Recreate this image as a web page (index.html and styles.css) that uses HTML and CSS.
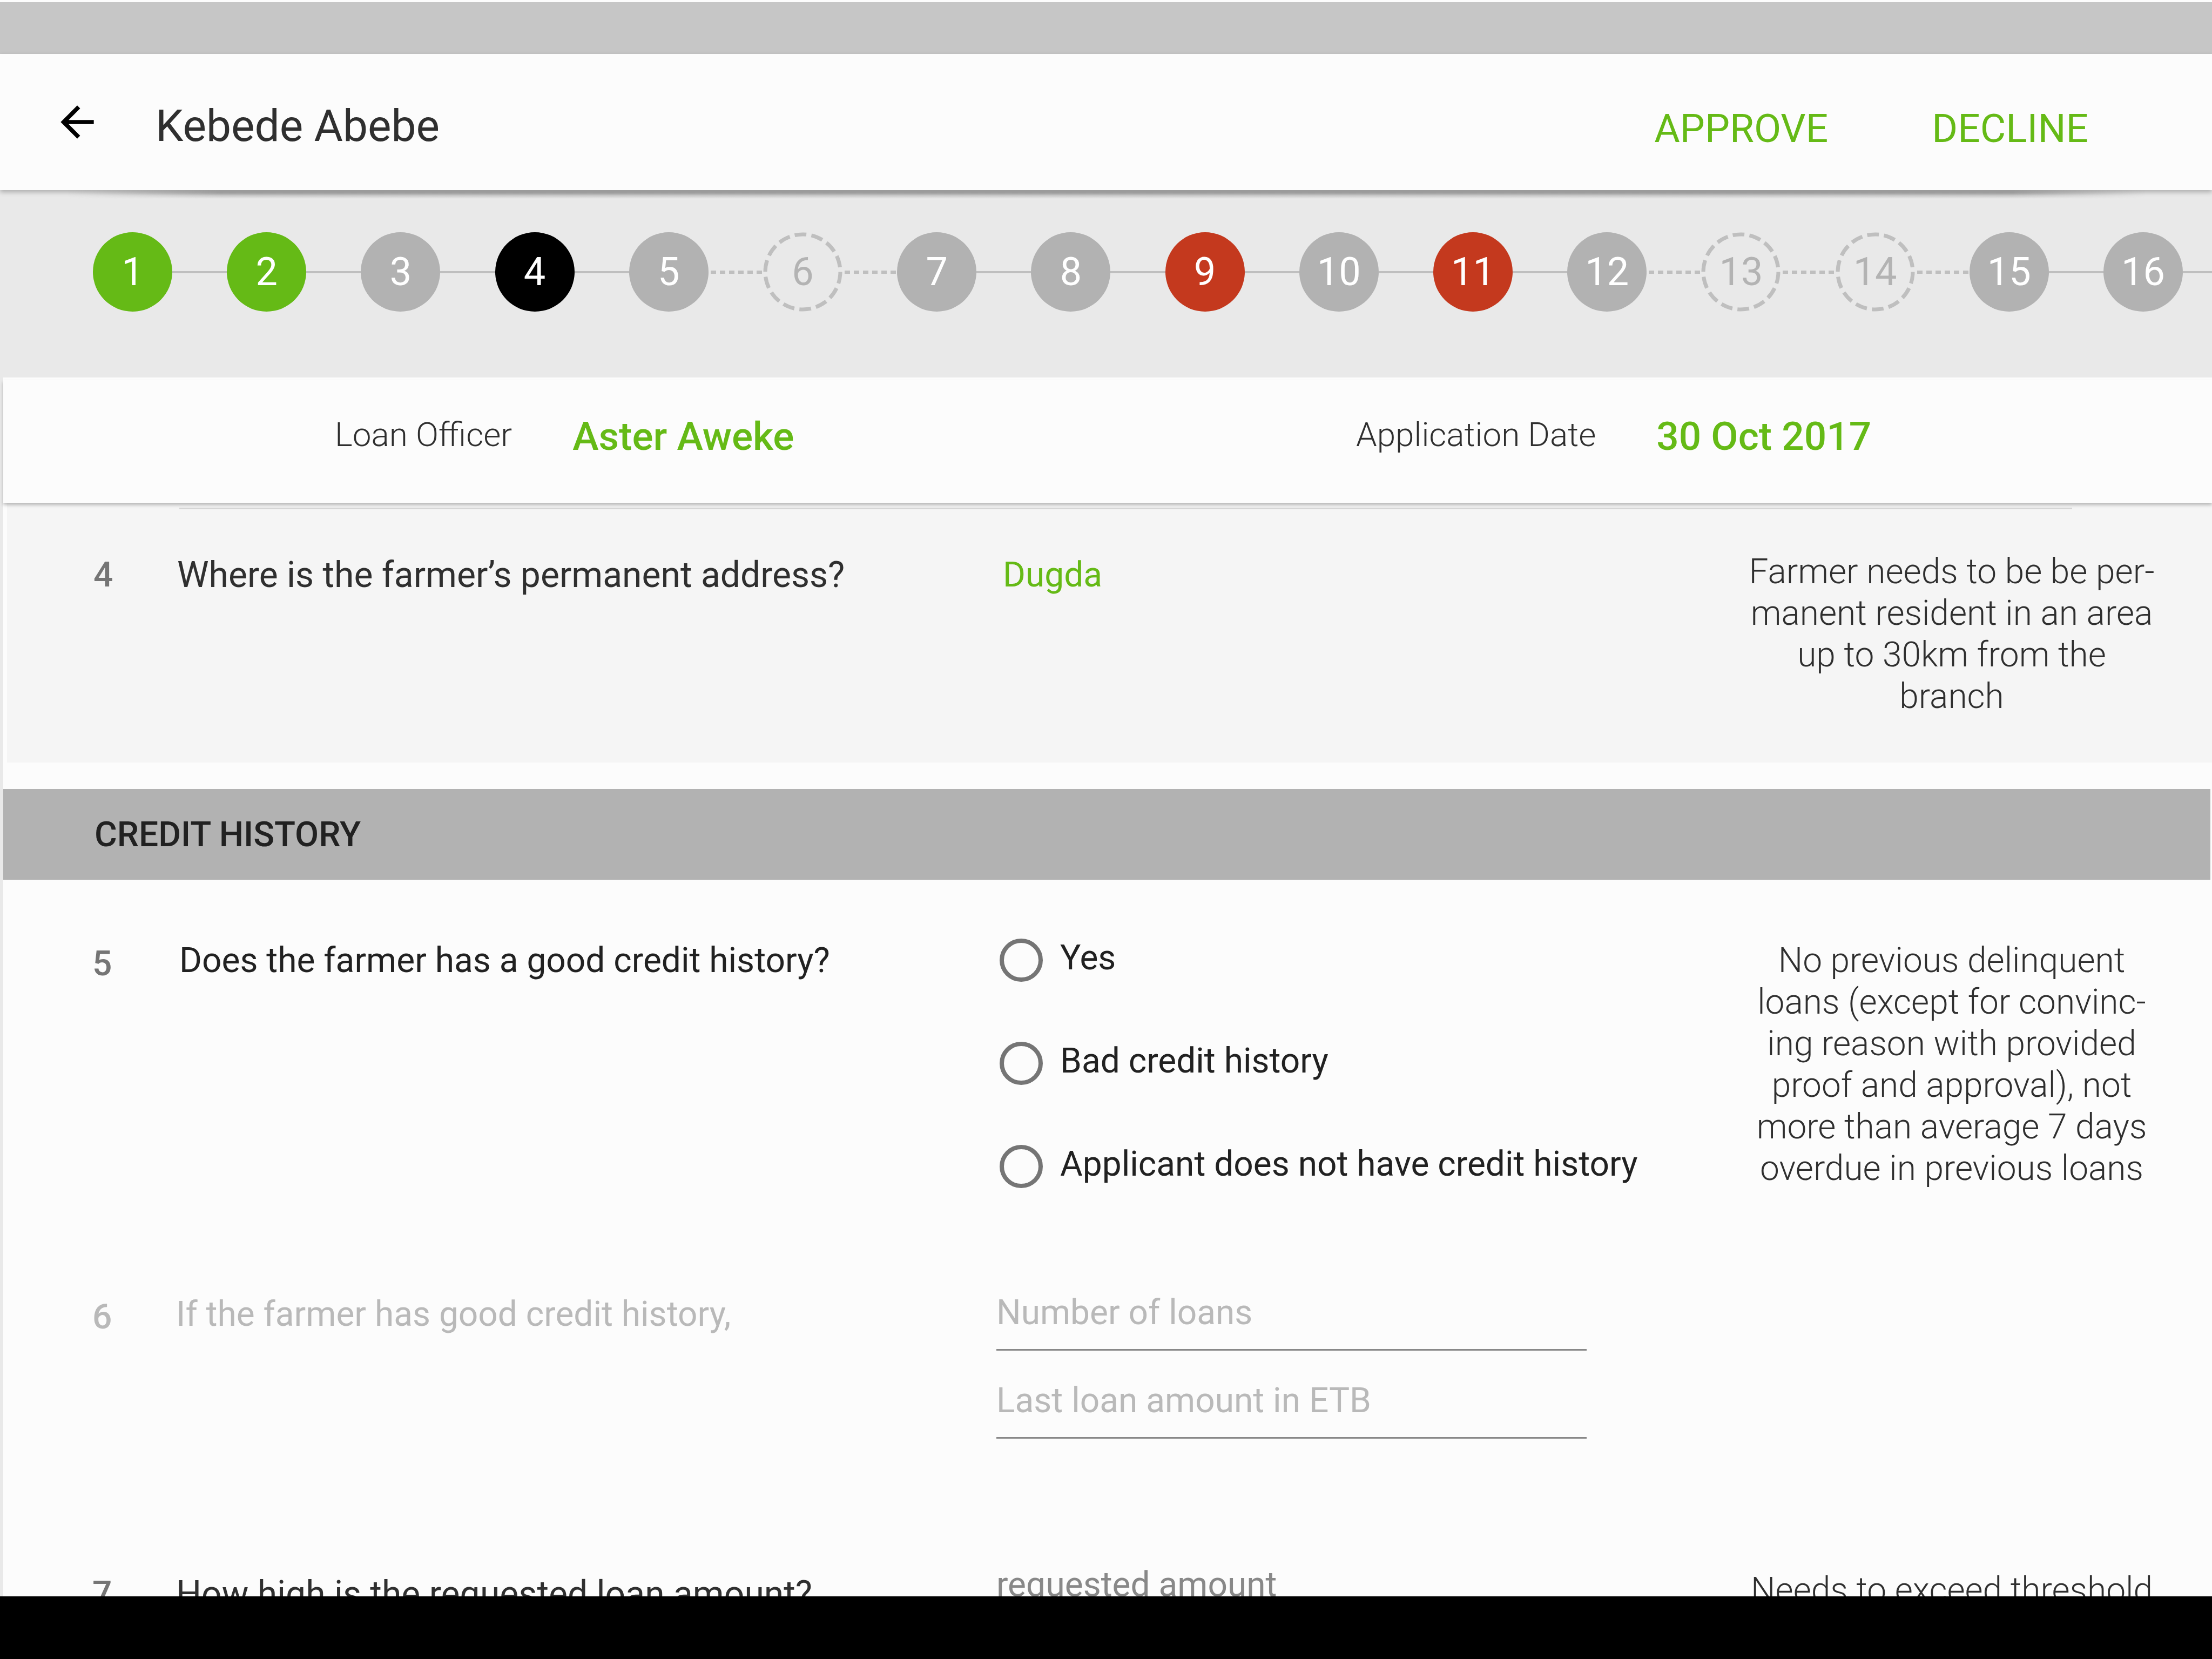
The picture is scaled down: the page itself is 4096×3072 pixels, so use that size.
FILE: index.html
```html
<!DOCTYPE html>
<html lang="en">
<head>
  <meta charset="utf-8">
  <title>Loan application – Kebede Abebe</title>
  <link rel="stylesheet" href="styles.css">
</head>
<body>
  <div class="status-bar"></div>

  <header class="app-bar">
    <button class="back" type="button" aria-label="Back">
      <svg viewBox="0 0 24 24" aria-hidden="true"><path d="M20 11H7.83l5.59-5.59L12 4l-8 8 8 8 1.41-1.41L7.83 13H20z"/></svg>
    </button>
    <h1 class="title">Kebede Abebe</h1>
    <div class="actions">
      <button class="action" type="button">APPROVE</button>
      <button class="action" type="button">DECLINE</button>
    </div>
  </header>

  <nav class="stepper" aria-label="Application steps">
    <ol class="steps">
      <li class="step"><button class="dot done" type="button">1</button></li>
      <li class="step"><button class="dot done" type="button">2</button></li>
      <li class="step"><button class="dot" type="button">3</button></li>
      <li class="step"><button class="dot current" type="button" aria-current="step">4</button></li>
      <li class="step dotted"><button class="dot" type="button">5</button></li>
      <li class="step dotted"><button class="dot optional" type="button"><svg class="ring" viewBox="0 0 146 146" aria-hidden="true"><circle cx="73" cy="73" r="69"/></svg>6</button></li>
      <li class="step"><button class="dot" type="button">7</button></li>
      <li class="step"><button class="dot" type="button">8</button></li>
      <li class="step"><button class="dot error" type="button">9</button></li>
      <li class="step"><button class="dot" type="button">10</button></li>
      <li class="step"><button class="dot error" type="button">11</button></li>
      <li class="step dotted"><button class="dot" type="button">12</button></li>
      <li class="step dotted"><button class="dot optional" type="button"><svg class="ring" viewBox="0 0 146 146" aria-hidden="true"><circle cx="73" cy="73" r="69"/></svg>13</button></li>
      <li class="step dotted"><button class="dot optional" type="button"><svg class="ring" viewBox="0 0 146 146" aria-hidden="true"><circle cx="73" cy="73" r="69"/></svg>14</button></li>
      <li class="step"><button class="dot" type="button">15</button></li>
      <li class="step"><button class="dot" type="button">16</button></li>
    </ol>
  </nav>

  <main class="sheet">
    <dl class="meta">
      <div class="meta-item">
        <dt>Loan Officer</dt>
        <dd>Aster Aweke</dd>
      </div>
      <div class="meta-item">
        <dt>Application Date</dt>
        <dd>30 Oct 2017</dd>
      </div>
    </dl>

    <section class="answered">
      <hr class="divider">
      <div class="row row-address">
        <span class="number">4</span>
        <p class="question">Where is the farmer’s permanent address?</p>
        <p class="answer value">Dugda</p>
        <p class="note">Farmer needs to be be per-<br>manent resident in an area<br>up to 30km from the<br>branch</p>
      </div>
    </section>

    <h2 class="section-title">CREDIT HISTORY</h2>

    <section class="questions">
      <div class="row row-history">
        <span class="number">5</span>
        <p class="question" id="q5">Does the farmer has a good credit history?</p>
        <div class="answer options" role="radiogroup" aria-labelledby="q5">
          <label class="option"><input type="radio" name="history"> Yes</label>
          <label class="option"><input type="radio" name="history"> Bad credit history</label>
          <label class="option"><input type="radio" name="history"> Applicant does not have credit history</label>
        </div>
        <p class="note">No previous delinquent<br>loans (except for convinc-<br>ing reason with provided<br>proof and approval), not<br>more than average 7 days<br>overdue in previous loans</p>
      </div>

      <div class="row row-loans">
        <span class="number">6</span>
        <p class="question">If the farmer has good credit history,</p>
        <div class="answer fields">
          <input class="field" type="text" placeholder="Number of loans" aria-label="Number of loans">
          <input class="field" type="text" placeholder="Last loan amount in ETB" aria-label="Last loan amount in ETB">
        </div>
      </div>

      <div class="row row-amount">
        <span class="number">7</span>
        <label class="question" for="amount">How high is the requested loan amount?</label>
        <div class="answer fields">
          <input class="field strong" id="amount" type="text" placeholder="requested amount">
        </div>
        <p class="note">Needs to exceed threshold</p>
      </div>
    </section>
  </main>

  <div class="nav-bar"></div>
</body>
</html>
```

FILE: styles.css
```css
:root {
  --green: #65ba16;
  --red: #c4391e;
  --paper: #fcfcfc;
  --ink: #2f2f2f;
  --ink-strong: #212121;
  --grey: #b2b2b2;
  --line: #bfbfbf;
  --muted: #757575;
  --disabled: #b9b9b9;
}

* {
  box-sizing: border-box;
}

body {
  margin: 0;
  height: 100vh;
  display: flex;
  flex-direction: column;
  overflow: hidden;
  background: #e9e9e9;
  color: var(--ink);
  font: 400 64px/77px Roboto, sans-serif;
}

h1, h2, p, dl, dd, ol {
  margin: 0;
  padding: 0;
}

button {
  border: 0;
  padding: 0;
  background: none;
  font: inherit;
  cursor: pointer;
}

.status-bar {
  flex: none;
  height: 100px;
  border-top: 4px solid var(--paper);
  background: #c6c6c6;
}

.nav-bar {
  flex: none;
  height: 116px;
  background: #000;
}

/* App bar */

.app-bar {
  position: relative;
  flex: none;
  height: 252px;
  padding: 14px 229px 0 97px;
  display: flex;
  align-items: center;
  background: var(--paper);
  box-shadow: 0 4px 8px rgba(0, 0, 0, 0.25);
}

.app-bar::after {
  content: "";
  position: absolute;
  inset: 100% 0 auto;
  height: 16px;
  background: linear-gradient(#9b9b9b 4px, #aaa 7px, #c8c8c8 10px, rgba(233, 233, 233, 0));
  mask-image: linear-gradient(90deg, transparent 3%, #000 10%, #000 91%, transparent 97%);
}

.back {
  width: 92px;
  margin-right: 99px;
  padding-bottom: 14px;
}

.back svg {
  display: block;
  width: 92px;
  height: 92px;
}

.title {
  font-weight: 400;
  font-size: 82px;
  line-height: 94px;
}

.actions {
  margin-left: auto;
  padding-top: 10px;
  display: flex;
  gap: 192px;
}

.action {
  color: var(--green);
  font-size: 73px;
  line-height: 84px;
}

/* Stepper */

.stepper {
  flex: none;
  height: 347px;
  padding: 78px 0 0 172px;
}

.steps {
  display: grid;
  grid-template-columns: repeat(15, 1fr) 201px;
  list-style: none;
}

.step {
  display: flex;
  align-items: center;
}

.step::after {
  content: "";
  flex: 1;
  height: 4px;
  background: var(--line);
}

.step.dotted::after {
  height: 6px;
  margin: 0 0 0 4px;
  background: repeating-linear-gradient(90deg, var(--line) 0 10px, transparent 10px 17px);
}

.dot {
  position: relative;
  flex: none;
  width: 147px;
  height: 147px;
  border-radius: 50%;
  background: var(--grey);
  color: #fff;
  font-size: 72px;
  line-height: 147px;
}

.dot.done {
  background: var(--green);
}

.dot.current {
  background: #000;
}

.dot.error {
  background: var(--red);
}

.dot.optional {
  background: none;
  color: #b3b3b3;
}

.ring {
  position: absolute;
  inset: 0;
  fill: none;
  stroke: var(--line);
  stroke-width: 7;
  stroke-dasharray: 21.6 9.37;
}

/* Sheet */

.sheet {
  flex: 1;
  min-height: 0;
  margin-left: 6px;
  padding-top: 5px;
  overflow: clip;
  overflow-clip-margin: 6px;
  background: var(--paper);
}

.meta {
  position: relative;
  height: 227px;
  padding: 62px 0 0 614px;
  display: grid;
  grid-template-columns: 54.4% 1fr;
  background: var(--paper);
  box-shadow: 0 4px 6px rgba(0, 0, 0, 0.26);
}

.meta-item {
  display: flex;
  align-items: flex-start;
  gap: 112px;
}

.meta dt {
  font-weight: 300;
  font-size: 62px;
}

.meta dd {
  color: var(--green);
  font-weight: 500;
  font-size: 73px;
  line-height: 84px;
}

.answered {
  height: 481px;
  margin-left: 7px;
  padding-top: 9px;
  background: #f5f5f5;
}

.divider {
  height: 3px;
  margin: 0 259px 0 319px;
  border: 0;
  background: #d6d6d6;
}

.section-title {
  height: 168px;
  margin: 49px 3px 0 0;
  padding: 46px 0 0 169px;
  background: var(--grey);
  color: var(--ink-strong);
  font-weight: 500;
  font-size: 64px;
  line-height: 77px;
}

.row {
  display: grid;
  grid-template-columns: 155px 1517px minmax(0, 1fr) 760px;
  align-items: start;
  padding: 0 102px 0 165px;
}

.answered .row {
  padding-left: 160px;
}

.number {
  color: var(--muted);
  font-weight: 500;
}

.note {
  font-weight: 300;
  text-align: center;
  white-space: nowrap;
}

.value {
  padding-left: 12px;
  color: var(--green);
}

.row-address {
  padding-top: 77px;
}

.row-address .number,
.row-address .question,
.row-address .value {
  padding-top: 6px;
}

.row-address .question,
.row-amount .question {
  font-size: 66px;
}

.row-history {
  padding-top: 109px;
  color: var(--ink-strong);
}

.row-history .question,
.row-history .note {
  padding-top: 2px;
}

.row-history .question {
  padding-left: 6px;
}

.row-history .note {
  color: var(--ink);
}

.row-history .number {
  padding-top: 8px;
}

.row-loans {
  padding-top: 190px;
}

.row-loans .question {
  padding-top: 3px;
  color: var(--disabled);
}

.row-loans .number {
  padding-top: 8px;
  color: var(--disabled);
}

.row-amount {
  padding-top: 232px;
}

.row-amount .number,
.row-amount .question {
  padding-top: 17px;
}

.row-amount .note {
  padding-top: 10px;
}

/* Answer controls */

.options {
  display: flex;
  flex-direction: column;
  align-items: flex-start;
  gap: 111px;
  padding-left: 8px;
}

.option {
  height: 80px;
  display: flex;
  align-items: flex-start;
  gap: 32px;
  line-height: 72px;
  white-space: nowrap;
}

.option input {
  appearance: none;
  flex: none;
  width: 80px;
  height: 80px;
  margin: 0;
  border: 8px solid var(--muted);
  border-radius: 50%;
}

.option input:checked {
  background: radial-gradient(var(--green) 50%, transparent 52%);
}

.fields {
  display: flex;
  flex-direction: column;
  gap: 54px;
  padding: 0 296px 0 2px;
}

.field {
  width: 100%;
  height: 109px;
  padding: 0 0 29px;
  border: 0;
  border-bottom: 3px solid #888;
  border-radius: 0;
  background: none;
  color: var(--ink);
  font: inherit;
}

.field::placeholder {
  color: var(--disabled);
  opacity: 1;
}

.field.strong::placeholder {
  color: #888;
}
```
